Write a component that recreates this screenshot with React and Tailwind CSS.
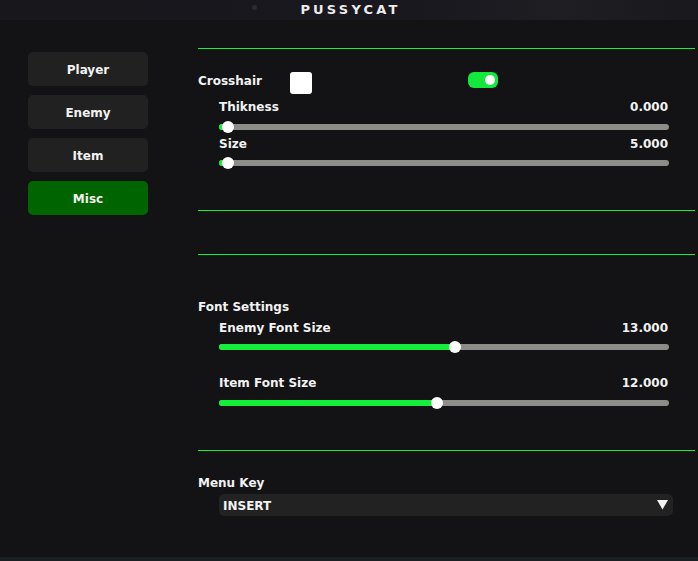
import React from "react";

const FONT = { fontFamily: '"DejaVu Sans", Verdana, sans-serif' };

function Slider({ knob }) {
  return (
    <div className="relative h-[12px] w-[450px]">
      <div className="absolute left-0 right-0 top-[3px] h-[6px] rounded-[3px] bg-[#8c8c88]" />
      <div
        className="absolute left-0 top-[3px] h-[6px] rounded-l-[3px] bg-[#14ef3c]"
        style={{ width: knob }}
      />
      <div
        className="absolute top-0 h-[12px] w-[12px] rounded-full bg-white"
        style={{ left: knob - 6 }}
      />
    </div>
  );
}

function LabelRow({ label, value, className = "" }) {
  return (
    <div className={"ml-[21px] flex w-[450px] justify-between leading-[16px] " + className}>
      <span>{label}</span>
      <span className="pr-px">{value}</span>
    </div>
  );
}

function Line({ className = "" }) {
  return <div className={"h-px w-[497px] bg-[#14ef3c] " + className} />;
}

export default function App() {
  const tabs = ["Player", "Enemy", "Item", "Misc"];
  return (
    <div
      className="relative flex h-[561px] w-[698px] flex-col overflow-hidden bg-[#1a1f23] text-[12px] font-bold text-[#f2f2f2]"
      style={FONT}
    >
      <div className="relative flex h-[20px] items-center justify-center bg-[linear-gradient(90deg,#17171c_0%,#19181e_60%,#1f1e23_80%,#19181d_100%)]">
        <div className="absolute left-[252px] top-[5px] h-[5px] w-[5px] rounded-full bg-[#2c2b31]" />
        <span className="pl-[3px] text-[13px] tracking-[3.2px] text-[#ececec]">PUSSYCAT</span>
      </div>
      <div className="flex h-[537px] bg-[#131315]">
        <div className="flex w-[198px] flex-col gap-[9px] pl-[28px] pt-[32px]">
          {tabs.map((t) => (
            <div
              key={t}
              className={
                "flex h-[34px] w-[120px] items-center justify-center rounded-[5px] pt-[2px] " +
                (t === "Misc" ? "bg-[#006400]" : "bg-[#212121]")
              }
            >
              {t}
            </div>
          ))}
        </div>
        <div className="flex flex-col">
          <Line className="mt-[28px]" />
          <div className="mt-[23px] flex h-[22px] items-start">
            <span className="mt-px w-[92px] leading-[16px]">Crosshair</span>
            <div className="h-[22px] w-[22px] rounded-[3px] bg-white" />
            <div className="ml-[156px] flex h-[16px] w-[30px] items-center justify-end rounded-[6px] bg-[#14e83c] pr-[3px]">
              <div className="h-[10px] w-[10px] rounded-full bg-white" />
            </div>
          </div>
          <LabelRow label="Thikness" value="0.000" className="mt-[5px]" />
          <div className="ml-[21px] mt-[6px]">
            <Slider knob={9} />
          </div>
          <LabelRow label="Size" value="5.000" className="mt-[3px]" />
          <div className="ml-[21px] mt-[5px]">
            <Slider knob={9} />
          </div>
          <Line className="mt-[41px]" />
          <Line className="mt-[43px]" />
          <span className="mt-[44px] leading-[16px]">Font Settings</span>
          <LabelRow label="Enemy Font Size" value="13.000" className="mt-[5px]" />
          <div className="ml-[21px] mt-[5px]">
            <Slider knob={236} />
          </div>
          <LabelRow label="Item Font Size" value="12.000" className="mt-[22px]" />
          <div className="ml-[21px] mt-[6px]">
            <Slider knob={218} />
          </div>
          <Line className="mt-[41px]" />
          <span className="mt-[24px] leading-[16px]">Menu Key</span>
          <div className="ml-[21px] mt-[3px] flex h-[22px] w-[454px] items-center justify-between rounded-[5px] bg-[#222222] pl-[4px] pr-[5px]">
            <span className="pt-px leading-[16px]">INSERT</span>
            <svg width="11" height="10" viewBox="0 0 11 10">
              <polygon points="0,0 11,0 5.5,9.5" fill="#f2f2f2" />
            </svg>
          </div>
        </div>
      </div>
    </div>
  );
}
